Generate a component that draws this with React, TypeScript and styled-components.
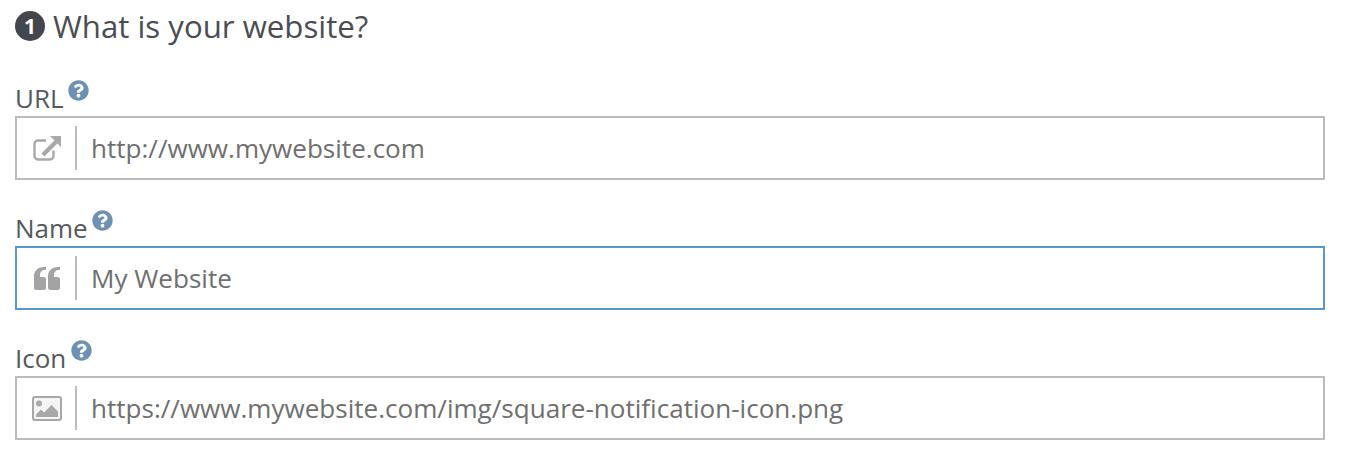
import React from 'react';
import styled, { createGlobalStyle } from 'styled-components';
import { FaQuestionCircle } from 'react-icons/fa';

const GlobalStyle = createGlobalStyle`
    html, body {
        margin: 0;
        padding: 0;
        background: white;
        font-family: "Open Sans", "Liberation Sans", sans-serif;
    }
`

const Page = styled.div`
    width: 1345px;
    height: 454px;
    padding: 7px 20px 0 15px;
    box-sizing: border-box;
    overflow: hidden;
`

const Heading = styled.div`
    display: flex;
    align-items: center;
    height: 38px;
    font-size: 31.2px;
    line-height: 38px;
    color: #4a4d52;
`

const StepBadge = styled.span`
    width: 30px;
    height: 30px;
    margin-right: 8px;
    border-radius: 50%;
    background: #43464c;
    color: white;
    font-size: 21px;
    font-weight: 700;
    line-height: 30px;
    text-align: center;
`

const Fields = styled.div`
    display: flex;
    flex-direction: column;
    gap: 22px;
    margin-top: 27px;
`

const Field = styled.div`
    display: flex;
    flex-direction: column;
`

const Label = styled.div`
    display: flex;
    align-items: flex-start;
    height: 44px;
    padding-top: 10px;
    box-sizing: border-box;
    font-size: 26px;
    line-height: 33px;
    color: #55585c;
`

const Help = styled.span`
    display: flex;
    margin: -2px 0 0 4.5px;
    font-size: 21px;
    color: #6d91b4;
`

const InputBox = styled.div<{ $focused?: boolean }>`
    display: flex;
    align-items: center;
    height: 64px;
    padding: 8px 0;
    box-sizing: border-box;
    border: 2px solid ${p => (p.$focused ? '#5b97c9' : '#bcbcbc')};
    background: white;
`

const IconCell = styled.div`
    display: flex;
    align-items: center;
    justify-content: center;
    width: 60px;
    height: 44px;
    box-sizing: border-box;
    border-right: 2px solid #bcbcbc;
    padding-left: 2px;
`

const Value = styled.div`
    padding-left: 14px;
    font-size: 26.07px;
    line-height: 34px;
    color: #6f6f6f;
`

const ExternalLinkIcon = () => (
    <svg width="28" height="25" viewBox="0 0 28 25" fill="none">
        <path
            d="M20.5 14.5V20a3.5 3.5 0 0 1-3.5 3.5H5A3.5 3.5 0 0 1 1.5 20V8A3.5 3.5 0 0 1 5 4.500h8"
            stroke="#a8a8a8"
            strokeWidth="2.4"
        />
        <path d="M17 0h11v11l-3.600-3.600-13 13-3-3 13-13z" fill="#a8a8a8" />
    </svg>
)

const QuoteIcon = () => (
    <svg width="26" height="23" viewBox="0 0 26 23" fill="#a3a3a3">
        <path d="M12 0v3h-1C8 3 6 5 6 8v2h3.500A2.500 2.500 0 0 1 12 12.500v8A2.500 2.500 0 0 1 9.500 23h-7A2.500 2.500 0 0 1 0 20.500V9C0 4 4 0 9.500 0z" />
        <path transform="translate(14 0)" d="M12 0v3h-1C8 3 6 5 6 8v2h3.500A2.500 2.500 0 0 1 12 12.500v8A2.500 2.500 0 0 1 9.500 23h-7A2.500 2.500 0 0 1 0 20.500V9C0 4 4 0 9.500 0z" />
    </svg>
)

const ImageIcon = () => (
    <svg width="30" height="25" viewBox="0 0 30 25" fill="none">
        <rect x="1" y="1" width="28" height="23" rx="2" stroke="#a8a8a8" strokeWidth="2" fill="#f4f4f4" />
        <circle cx="7" cy="7.500" r="3" fill="#a8a8a8" />
        <path d="M4 21v-2.500l5-5 3 3 7.500-7.500 6.500 6.500V21z" fill="#a8a8a8" />
    </svg>
)

const fields = [
    { label: 'URL', value: 'http://www.mywebsite.com', icon: <ExternalLinkIcon /> },
    { label: 'Name', value: 'My Website', icon: <QuoteIcon />, focused: true },
    { label: 'Icon', value: 'https://www.mywebsite.com/img/square-notification-icon.png', icon: <ImageIcon /> },
]

const App = () => {
    return (
        <Page>
            <GlobalStyle />
            <Heading>
                <StepBadge>1</StepBadge>
                What is your website?
            </Heading>
            <Fields>
                {fields.map(field => (
                    <Field key={field.label}>
                        <Label>
                            {field.label}
                            <Help><FaQuestionCircle /></Help>
                        </Label>
                        <InputBox $focused={field.focused}>
                            <IconCell>{field.icon}</IconCell>
                            <Value>{field.value}</Value>
                        </InputBox>
                    </Field>
                ))}
            </Fields>
        </Page>
    )
}

export default App
